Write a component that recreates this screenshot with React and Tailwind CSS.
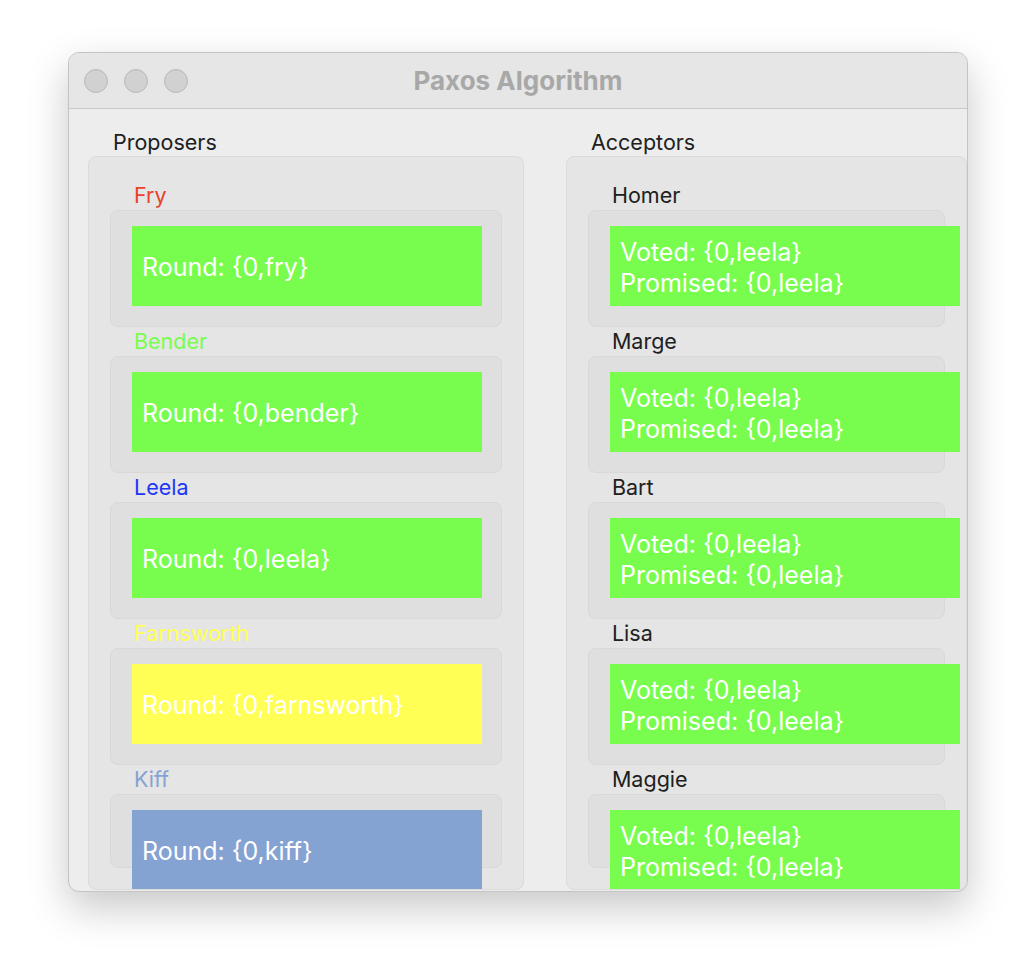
const proposers = [
  { name: "Fry", color: "text-[#ea4129]", box: "bg-[#78fd4f]", text: "Round: {0,fry}" },
  { name: "Bender", color: "text-[#78fd4f]", box: "bg-[#78fd4f]", text: "Round: {0,bender}" },
  { name: "Leela", color: "text-[#2236f5]", box: "bg-[#78fd4f]", text: "Round: {0,leela}" },
  { name: "Farnsworth", color: "text-[#ffff55]", box: "bg-[#ffff55]", text: "Round: {0,farnsworth}" },
  { name: "Kiff", color: "text-[#84a2d2]", box: "bg-[#84a2d2]", text: "Round: {0,kiff}" },
];

const acceptors = ["Homer", "Marge", "Bart", "Lisa", "Maggie"];

const Row = ({ last, children }) => (
  <div
    className={
      "rounded-[8px] border border-[#d7d8d7] bg-[#dedfde] pl-[21px] pt-[15px] " +
      (last ? "h-[74px]" : "h-[117px]")
    }
  >
    {children}
  </div>
);

const Label = ({ className, children }) => (
  <div className={"h-[29px] pl-[24px] text-[21.5px] leading-[29px] " + className}>{children}</div>
);

const App = () => {
  return (
    <div
      className="min-h-screen bg-white pl-[68px] pt-[52px]"
      style={{ fontFamily: "Inter, 'Noto Sans', sans-serif" }}
    >
      <div className="flex h-[840px] w-[900px] flex-col overflow-hidden rounded-[11px] border border-[#c4c4c4] bg-[#ecedec] shadow-[0_16px_40px_rgba(0,0,0,0.22)]">
        {/* title bar */}
        <div className="relative flex h-[56px] shrink-0 items-center border-b border-[#c8c9c8] bg-[#e5e6e5] pl-[15px]">
          <div className="flex gap-[16px]">
            <div className="h-[24px] w-[24px] rounded-full border border-[#b7b8b7] bg-[#d0d1d0]" />
            <div className="h-[24px] w-[24px] rounded-full border border-[#b7b8b7] bg-[#d0d1d0]" />
            <div className="h-[24px] w-[24px] rounded-full border border-[#b7b8b7] bg-[#d0d1d0]" />
          </div>
          <div className="absolute inset-0 flex items-center justify-center text-[26px] font-bold text-[#a8a8a8]">
            Paxos Algorithm
          </div>
        </div>

        <div className="flex pl-[19px] pt-[19px]">
          {/* proposers */}
          <div className="w-[437px]">
            <div className="h-[28px] pl-[25px] text-[21.5px] leading-[28px] text-[#202020]">Proposers</div>
            <div className="h-[734px] overflow-hidden rounded-[8px] border border-[#dadbda] bg-[#e4e5e4] px-[21px] pt-[24px]">
              {proposers.map((p, i) => (
                <div key={p.name}>
                  <Label className={p.color}>{p.name}</Label>
                  <Row last={i === proposers.length - 1}>
                    <div className={"flex h-[80px] w-[350px] items-center pl-[10px] pt-[3px] text-[25px] text-white " + p.box}>
                      {p.text}
                    </div>
                  </Row>
                </div>
              ))}
            </div>
          </div>

          {/* acceptors */}
          <div className="ml-[42px] w-[402px]">
            <div className="h-[28px] pl-[25px] text-[21.5px] leading-[28px] text-[#202020]">Acceptors</div>
            <div className="h-[734px] overflow-hidden rounded-[8px] border border-[#dadbda] bg-[#e4e5e4] pl-[21px] pt-[24px]">
              {acceptors.map((a, i) => (
                <div key={a} className="w-[357px]">
                  <Label className="text-[#202020]">{a}</Label>
                  <Row last={i === acceptors.length - 1}>
                    <div className="flex h-[80px] w-[350px] flex-col justify-center pl-[10px] pt-[3px] text-[25px] leading-[31px] text-white bg-[#78fd4f]">
                      <div>Voted: {"{0,leela}"}</div>
                      <div>Promised: {"{0,leela}"}</div>
                    </div>
                  </Row>
                </div>
              ))}
            </div>
          </div>
        </div>
      </div>
    </div>
  );
};

export default App;
